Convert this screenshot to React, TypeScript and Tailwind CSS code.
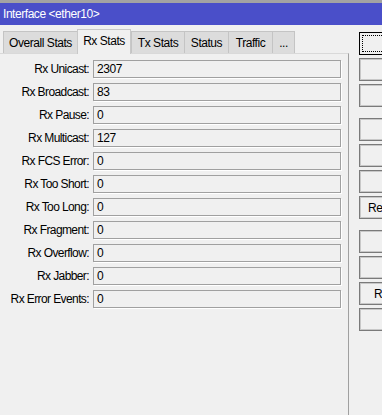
import React from "react";

const rows: [string, string][] = [
  ["Rx Unicast:", "2307"],
  ["Rx Broadcast:", "83"],
  ["Rx Pause:", "0"],
  ["Rx Multicast:", "127"],
  ["Rx FCS Error:", "0"],
  ["Rx Too Short:", "0"],
  ["Rx Too Long:", "0"],
  ["Rx Fragment:", "0"],
  ["Rx Overflow:", "0"],
  ["Rx Jabber:", "0"],
  ["Rx Error Events:", "0"],
];

const tabs = [
  { label: "Overall Stats", w: "w-[74px]", active: false },
  { label: "Rx Stats", w: "w-[54px]", active: true },
  { label: "Tx Stats", w: "w-[53px]", active: false },
  { label: "Status", w: "w-[44px]", active: false },
  { label: "Traffic", w: "w-[44px]", active: false },
  { label: "...", w: "w-[23px]", active: false },
];

function Btn({ text, pl, focused }: { text?: string; pl?: string; focused?: boolean }) {
  if (focused) {
    return (
      <div className="h-[23px] w-[80px] shrink-0 border border-black bg-[#f0f0f0] p-[2px]">
        <div className="h-full w-full border border-dotted border-black" />
      </div>
    );
  }
  return (
    <div
      className={`h-[23px] w-[80px] shrink-0 whitespace-nowrap border border-[#7a7a7a] bg-[#f0f0f0] shadow-[inset_1px_1px_0_#c8c8c8,inset_-1px_-1px_0_#c8c8c8] flex items-center ${pl ?? ""}`}
    >
      {text ? <span className="text-black">{text}</span> : null}
    </div>
  );
}

export default function App() {
  return (
    <div
      className="w-[382px] h-[415px] overflow-hidden bg-[#f0f0f0] text-[12px] tracking-[-0.45px] text-black flex flex-col"
      style={{ fontFamily: '"Liberation Sans", Arial, sans-serif' }}
    >
      <div className="h-[3px] bg-[#a3a3a3] shrink-0" />
      <div className="h-[22px] bg-[#4a4fc9] text-white flex items-center pl-[3px] shrink-0">
        Interface &lt;ether10&gt;
      </div>
      <div className="flex flex-1 min-h-0">
        <div className="w-[349px] flex flex-col pt-[3px] shrink-0">
          <div className="flex items-end h-[25px] pl-[3px] shrink-0">
            {tabs.map((t) =>
              t.active ? (
                <div
                  key={t.label}
                  className={`${t.w} h-[25px] bg-[#f0f0f0] border-t border-l border-r border-[#c8c8c8] flex items-center justify-center pb-[2px] relative z-10 -mb-[1px]`}
                >
                  {t.label}
                </div>
              ) : (
                <div
                  key={t.label}
                  className={`${t.w} h-[22px] bg-[#dcdcdc] border-t border-l border-[#c4c4c4] last:border-r flex items-center justify-center`}
                >
                  {t.label}
                </div>
              )
            )}
          </div>
          <div className="flex-1 border-t border-[#d9d9d9] border-r border-r-[#a0a0a0] pt-[6px] flex flex-col gap-[5px]">
            {rows.map(([l, v]) => (
              <div key={l} className="flex items-center h-[18px]">
                <div className="w-[90px] text-right pr-[1px] shrink-0 whitespace-nowrap tracking-[-0.6px]">{l}</div>
                <div className="ml-[3px] w-[248px] h-[18px] border border-[#a0a0a0] shadow-[1px_1px_0_#ffffff] flex items-center pl-[3px]">
                  {v}
                </div>
              </div>
            ))}
          </div>
        </div>
        <div className="ml-[10px] w-[23px] shrink-0 pt-[7px] flex flex-col gap-[3px] overflow-visible">
          <Btn focused />
          <Btn />
          <Btn />
          <div className="mt-[5px]" />
          <Btn />
          <Btn />
          <Btn />
          <Btn text="Reset MAC Address" pl="pl-[8px]" />
          <div className="mt-[5px]" />
          <Btn />
          <Btn />
          <Btn text="Reset Counters" pl="pl-[14px]" />
          <Btn />
        </div>
      </div>
    </div>
  );
}
